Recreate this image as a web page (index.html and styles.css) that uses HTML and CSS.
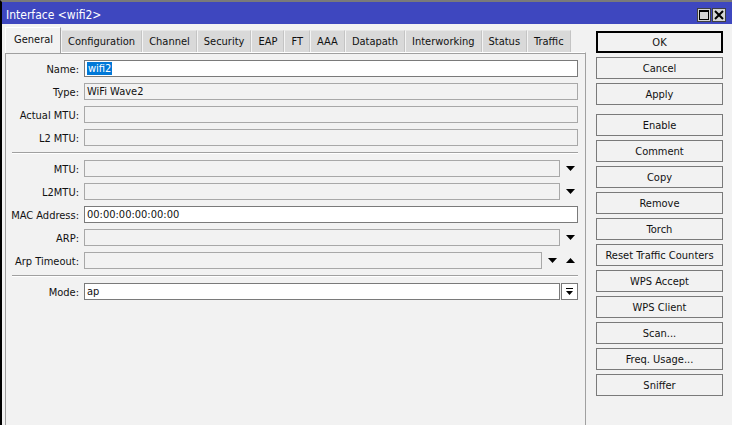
FILE: index.html
```html
<!DOCTYPE html>
<html lang="en">
<head>
  <meta charset="UTF-8" />
  <title>Interface &lt;wifi2&gt;</title>
  <link rel="stylesheet" href="styles.css">
</head>
<body>
  <div class="window">
    <!-- Title bar -->
    <div class="titlebar">
      <span class="title">Interface &lt;wifi2&gt;</span>
      <div class="controls">
        <span class="ctl"><svg width="10" height="10" viewBox="0 0 10 10"><rect x="0.5" y="0.5" width="9" height="9" fill="none" stroke="#000"/><rect x="0" y="0" width="10" height="2" fill="#000"/></svg></span>
        <span class="ctl"><svg width="10" height="10" viewBox="0 0 10 10"><path d="M1 1 L9 9 M9 1 L1 9" stroke="#000" stroke-width="2"/></svg></span>
      </div>
    </div>

    <div class="body">
      <!-- Tabs + form -->
      <div class="main">
        <div class="tabs">
          <div class="tab active">General</div>
          <div class="tab">Configuration</div>
          <div class="tab">Channel</div>
          <div class="tab">Security</div>
          <div class="tab">EAP</div>
          <div class="tab">FT</div>
          <div class="tab">AAA</div>
          <div class="tab">Datapath</div>
          <div class="tab">Interworking</div>
          <div class="tab">Status</div>
          <div class="tab">Traffic</div>
        </div>

        <div class="panel">
          <div class="row">
            <label>Name:</label>
            <div class="field white"><span class="sel">wifi2</span></div>
          </div>
          <div class="row">
            <label>Type:</label>
            <div class="field">WiFi Wave2</div>
          </div>
          <div class="row">
            <label>Actual MTU:</label>
            <div class="field"></div>
          </div>
          <div class="row">
            <label>L2 MTU:</label>
            <div class="field"></div>
          </div>

          <div class="sep"></div>

          <div class="row">
            <label>MTU:</label>
            <div class="field"></div>
            <span class="arrow"><svg width="9" height="5"><polygon points="0,0 9,0 4.5,5" fill="#000"/></svg></span>
          </div>
          <div class="row">
            <label>L2MTU:</label>
            <div class="field"></div>
            <span class="arrow"><svg width="9" height="5"><polygon points="0,0 9,0 4.5,5" fill="#000"/></svg></span>
          </div>
          <div class="row">
            <label>MAC Address:</label>
            <div class="field white">00:00:00:00:00:00</div>
          </div>
          <div class="row">
            <label>ARP:</label>
            <div class="field"></div>
            <span class="arrow"><svg width="9" height="5"><polygon points="0,0 9,0 4.5,5" fill="#000"/></svg></span>
          </div>
          <div class="row">
            <label>Arp Timeout:</label>
            <div class="field"></div>
            <span class="arrow"><svg width="9" height="5"><polygon points="0,0 9,0 4.5,5" fill="#000"/></svg></span>
            <span class="arrow"><svg width="9" height="5"><polygon points="0,5 9,5 4.5,0" fill="#000"/></svg></span>
          </div>

          <div class="sep"></div>

          <div class="row">
            <label>Mode:</label>
            <div class="field white">ap</div>
            <span class="combo"><svg width="7" height="8"><rect x="0" y="0" width="7" height="1" fill="#000"/><polygon points="0,3 7,3 3.5,7" fill="#000"/></svg></span>
          </div>
        </div>
      </div>

      <!-- Buttons -->
      <div class="buttons">
        <div class="btn default">OK</div>
        <div class="btn">Cancel</div>
        <div class="btn group-end">Apply</div>
        <div class="btn">Enable</div>
        <div class="btn">Comment</div>
        <div class="btn">Copy</div>
        <div class="btn">Remove</div>
        <div class="btn">Torch</div>
        <div class="btn">Reset Traffic Counters</div>
        <div class="btn">WPS Accept</div>
        <div class="btn">WPS Client</div>
        <div class="btn">Scan...</div>
        <div class="btn">Freq. Usage...</div>
        <div class="btn">Sniffer</div>
      </div>
    </div>
  </div>
</body>
</html>
```

FILE: styles.css
```css
* {
  box-sizing: border-box;
}

body {
  margin: 0;
  font-family: "DejaVu Sans Condensed", "DejaVu Sans", sans-serif;
  font-stretch: condensed;
  font-size: 11px;
  color: #111;
  background-color: #f2f2f2;
  overflow: hidden;
}

.window {
  height: 100vh;
  display: flex;
  flex-direction: column;
  border-left: 2px solid #000;
  border-top: 2px solid #7a7a7a;
}

.titlebar {
  height: 22px;
  background-color: #3e47bf;
  color: #fff;
  display: flex;
  align-items: center;
  justify-content: space-between;
  padding: 4px 6px 0 4px;
  font-size: 12px;
}

.controls {
  display: flex;
  gap: 1px;
}

.ctl {
  width: 14px;
  height: 14px;
  background-color: #d4d4d4;
  border: 1px solid #404040;
  display: flex;
  align-items: center;
  justify-content: center;
}

.body {
  flex: 1;
  display: flex;
}

.main {
  width: 584px;
  padding-left: 3px;
  display: flex;
  flex-direction: column;
}

.tabs {
  height: 28px;
  display: flex;
  align-items: flex-end;
}

.tab {
  height: 22px;
  line-height: 22px;
  padding: 0 6px;
  background-color: #d9d9d9;
  border-top: 1px solid #e6e6e6;
  border-left: 1px solid #f4f4f4;
  border-right: 1px solid #c4c4c4;
  white-space: nowrap;
}

.tab.active {
  height: 26px;
  line-height: 24px;
  margin-bottom: -1px;
  padding: 0 7px 0 8px;
  background-color: #f2f2f2;
  border-left: 1px solid #fff;
  border-top: 1px solid #fff;
  border-right: 1px solid #a0a0a0;
  position: relative;
  z-index: 1;
}

.panel {
  flex: 1;
  border-top: 1px solid #fff;
  border-left: 1px solid #a0a0a0;
  border-right: 1px solid #a0a0a0;
  box-shadow: inset 0 1px 0 #a0a0a0;
  padding: 7px 7px 0 0;
}

.row {
  height: 17px;
  margin-bottom: 6px;
  display: flex;
  align-items: center;
}

.row label {
  width: 73px;
  margin-right: 5px;
  padding-top: 1px;
  text-align: right;
  white-space: nowrap;
}

.field {
  flex: 1;
  height: 17px;
  line-height: 14px;
  padding: 1px 0 0 2px;
  border: 1px solid #a8a8a8;
  background-color: #f2f2f2;
  white-space: nowrap;
  overflow: hidden;
}

.field.white {
  background-color: #fff;
  border-color: #7a7a7a;
}

.sel {
  background-color: #0078d7;
  color: #fff;
  padding: 0 1px;
}

.arrow {
  width: 18px;
  height: 17px;
  padding-left: 3px;
  display: flex;
  align-items: center;
  justify-content: center;
}

.combo {
  width: 17px;
  height: 17px;
  margin-left: 1px;
  background-color: #fff;
  border: 1px solid #7a7a7a;
  display: flex;
  align-items: center;
  justify-content: center;
}

.sep {
  height: 2px;
  margin: 0 0 6px 6px;
  border-top: 1px solid #a0a0a0;
  border-bottom: 1px solid #fff;
}

.buttons {
  padding: 7px 0 0 10px;
}

.btn {
  width: 127px;
  height: 22px;
  line-height: 18px;
  padding-top: 2px;
  margin-bottom: 4px;
  text-align: center;
  background-color: #f2f2f2;
  border: 1px solid #7a7a7a;
  white-space: nowrap;
}

.btn.default {
  border: 2px solid #000;
  padding-top: 1px;
}

.btn.group-end {
  margin-bottom: 9px;
}
```
